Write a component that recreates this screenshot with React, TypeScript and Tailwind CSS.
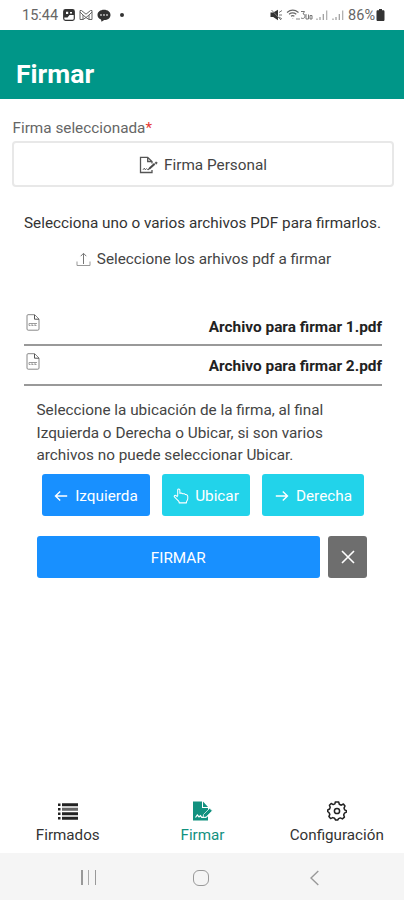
import type { ReactNode } from "react";

function ImageIcon() {
  return (
    <svg width="12" height="12" viewBox="0 0 12 12">
      <rect x="0.7" y="0.7" width="10.6" height="10.6" rx="1.8" fill="#fff" stroke="#333" strokeWidth="1.2" />
      <path d="M1 1h10v5H6.500L4.500 8.500H1z" fill="#333" />
      <path d="M3 2.800h2.200V5H3zM7 3h2v1.500H7z" fill="#fff" />
    </svg>
  );
}

function MailIcon() {
  return (
    <svg width="14" height="12" viewBox="0 0 14 12" fill="none" stroke="#666" strokeWidth="1">
      <path d="M1 1.500v9h3V6l3 2.500L10 6v4.500h3v-9h-1.500L7 5.200 2.500 1.500zM4 6 1 3M10 6l3-3M4 10.500 7 8.500l3 2" />
    </svg>
  );
}

function ChatIcon() {
  return (
    <svg width="14" height="13" viewBox="0 0 14 13">
      <path d="M7 .8c3.800 0 6.500 2.200 6.500 5.100S10.800 11 7.200 11L4.500 12.700 4 10.500C1.800 9.600.5 8 .5 5.900.5 3 3.200.8 7 .8z" fill="#333" />
      <g fill="#ccc"><circle cx="4" cy="6" r=".9" /><circle cx="7" cy="6" r=".9" /><circle cx="10" cy="6" r=".9" /></g>
    </svg>
  );
}

function MuteIcon() {
  return (
    <svg width="13" height="12" viewBox="0 0 13 12">
      <path d="M.5 3.500h2.700L8 .8v10.400L3.200 8H.5z" fill="#333" />
      <path d="M1.500 1l9.500 10M9 3.500l3-2M9 6h3M9 8l3 2" stroke="#777" strokeWidth="1" />
    </svg>
  );
}

function WifiIcon() {
  return (
    <svg width="14" height="12" viewBox="0 0 14 12" fill="none" stroke="#666" strokeWidth="1.200">
      <path d="M1 3.500C4.500.7 9 .7 12.500 3.500M3 5.300c2.300-1.700 5-1.700 7.300 0M5 7.200c1.100-.8 2.300-.8 3.400 0" />
      <path d="M6.700 9.200v.6M11 9v2M13 9v2" stroke="#999" />
    </svg>
  );
}

function VolteIcon() {
  return (
    <svg width="13" height="12" viewBox="0 0 13 12" fill="none" stroke="#777" strokeWidth="1">
      <path d="M1 2.500h3.500L3 5c3 0 2.500 4.500-.2 4.500L1 9M6 5v5h2.500V5.500M10 6.500h2V10h-2z" />
    </svg>
  );
}

function SignalIcon() {
  return (
    <svg width="12" height="12" viewBox="0 0 12 12" stroke="#999" strokeWidth="1.200">
      <path d="M1 9.500V11M4 8v3M7.300 5v6" />
      <path d="M10.700 1.500V11" stroke="#aaa" />
    </svg>
  );
}

function BatteryIcon() {
  return (
    <svg width="9" height="12" viewBox="0 0 9 12">
      <path d="M3 0h3v1.200h1.200c.8 0 1.300.5 1.300 1.300v8.200c0 .8-.5 1.300-1.300 1.300H1.800C1 12 .5 11.500.5 10.700V2.500C.5 1.700 1 1.200 1.800 1.200H3z" fill="#333" />
    </svg>
  );
}

function SignDocIcon() {
  return (
    <svg width="19" height="18" viewBox="0 0 19 18" fill="none" stroke="#555" strokeWidth="1.300">
      <path d="M13 14v2.500H1.500V1.300h7.200L13 5.500v2M8.700 1.300v4.200H13" />
      <path d="m10 11.800 5-4.500 1.200 1.100-5 4.500-1.700.4zM16 6.800l1.200-1 1.200 1.200-1.200 1.200z" fill="#444" strokeWidth=".5" />
      <path d="m4 13.800 1.300-1.600 1 1.600 1.200-1.200 1 1h1.500" strokeWidth="1" />
    </svg>
  );
}

function UploadIcon() {
  return (
    <svg width="15" height="15" viewBox="0 0 15 15" fill="none" stroke="#777" strokeWidth="1">
      <path d="M7.500 12V1.500M4.700 4.200l2.800-2.900 2.800 2.900" />
      <path d="M1 9.500v4h13v-4" stroke="#999" />
    </svg>
  );
}

function PdfIcon() {
  return (
    <svg width="14" height="17" viewBox="0 0 14 17" fill="none" stroke="#888" strokeWidth="1">
      <path d="M1 1.800C1 1 1.500.7 2 .7h6.700L13 5v10c0 .8-.4 1.200-1.200 1.200H2.200C1.400 16.200 1 15.800 1 15z" />
      <path d="M8.500.9v4.300H13" stroke="#555" />
      <path d="M3 9.500h8M3 11.500h1.500m1 0h2m1 0h2M3 9.500v2M6 9.500v2M9 9.500v2" strokeWidth=".8" />
    </svg>
  );
}

function ArrowIcon({ right = false }: { right?: boolean }) {
  return (
    <svg width="14" height="12" viewBox="0 0 14 12" fill="none" stroke="#fff" strokeWidth="1.400">
      {right ? <path d="M.8 6h11.700M7.800 1.500 12.500 6l-4.700 4.500" /> : <path d="M13.200 6H1.500M6.200 1.500 1.500 6l4.700 4.500" />}
    </svg>
  );
}

function PointerIcon() {
  return (
    <svg width="16" height="16" viewBox="0 0 17 17" fill="none" stroke="#fff" strokeWidth="1.100" strokeLinejoin="round">
      <path d="M5 8.500V2.200c0-1.600 2.300-1.600 2.300 0v3.500l1.500-.4 1.500.8 1.700-.1 1.300 1 1.200.1c.8.500 1.200 1 1.200 2v2c0 1.600-1 2.500-1.400 3.700v1H6.500v-1c-.5-1.500-2.300-2.600-3.700-4L1.500 9.500c-.8-1.200.4-2.100 1.500-1.500L5 9.500" />
    </svg>
  );
}

function ListIcon() {
  return (
    <svg width="20" height="17" viewBox="0 0 20 17" fill="#222">
      <path d="M0 .5h2.500V3H0zM0 5h2.500v2.500H0zM0 9.500h2.500V12H0zM0 14h2.500v2.500H0z" />
      <path d="M4 .3h16v2.900H4zM4 9.300h16v2.900H4zM4 13.800h16v2.900H4z" />
      <path d="M4 4.700h16v3.100H4z" fill="#666" />
    </svg>
  );
}

function SignSolidIcon() {
  return (
    <svg width="20" height="20" viewBox="0 0 20 20">
      <path d="M0 .5h9v6.500h6v3l-5 4.700V17h3l2-1.800v4.300H0z" fill="#12917f" />
      <path d="M10 .5 15 6h-5z" fill="#12917f" />
      <path d="m10.500 13.500 6.200-6.200 2.600 2.500-6.200 6.200-3 .6z" fill="#12917f" stroke="#fff" strokeWidth=".7" />
      <path d="m2.500 16.500 1.800-2.500 1.700 2 1.500-1.300 1.200 1.600h2" fill="none" stroke="#fff" strokeWidth="1.200" />
    </svg>
  );
}

function GearIcon() {
  return (
    <svg width="20" height="20" viewBox="0 0 20 20" fill="none" stroke="#222" strokeWidth="1.500" strokeLinejoin="round">
      <path d="M8.300 1h3.400l.6 2.300 2 .9 2.100-1.200 1.600 2-1 2.100.7 1.800 1.700.8v1.500l-2 1-.7 1.700.7 2.200-2 1.800-2.100-1-1.700.7-.9 1.400H8.600l-1-1.700-1.900-.7-2.100 1-1.700-2 .9-2.200-.7-1.700L.7 10.400V9l1.900-1 .6-1.800-.8-2L4.200 2.500l2 1.100 1.700-.7z" />
      <circle cx="10" cy="10" r="2.600" />
    </svg>
  );
}

function FileRow({ name }: { name: string }) {
  return (
    <div className="flex h-[39.5px] justify-between border-b-2 border-[#999] pl-[2px]">
      <div className="pt-[7px]"><PdfIcon /></div>
      <span className="pt-[10px] text-[15.400px] leading-5 font-bold whitespace-nowrap text-[#222]">{name}</span>
    </div>
  );
}

function Tab({ icon, label, className }: { icon: ReactNode; label: string; className: string }) {
  return (
    <div className={`flex flex-col items-center ${className}`}>
      <div className="flex h-[22px] items-center">{icon}</div>
      <span className="mt-[3px] text-[15.200px] leading-5 whitespace-nowrap">{label}</span>
    </div>
  );
}

export default function App() {
  return (
    <div className="flex h-[900px] w-[404px] flex-col overflow-hidden bg-white font-[Roboto,sans-serif] text-[15.300px] text-[#444]">
      <div className="flex h-[30px] shrink-0 items-center justify-between pr-[19px] pl-[22px]">
        <div className="flex items-center">
          <span className="w-[41px] pt-px text-[14.500px] text-[#666]">15:44</span>
          <div className="flex items-center gap-[4px]"><ImageIcon /><MailIcon /><ChatIcon /></div>
          <span className="ml-[9px] size-[3.500px] rounded-full bg-[#333]" />
        </div>
        <div className="flex items-center">
          <MuteIcon />
          <div className="ml-[3px] flex"><WifiIcon /><VolteIcon /></div>
          <div className="ml-[3px] flex gap-[4px]"><SignalIcon /><SignalIcon /></div>
          <span className="mr-px ml-[4px] pt-px text-[14.500px] text-[#666]">86%</span>
          <BatteryIcon />
        </div>
      </div>

      <header className="flex h-[69px] shrink-0 items-center bg-[#009688] pt-[19px] pl-[16px]">
        <h1 className="text-[26.500px] leading-8 font-bold text-white">Firmar</h1>
      </header>

      <main className="flex flex-1 flex-col">
        <label className="mt-[19px] ml-[12.500px] text-[15.300px] leading-5 text-[#666]">
          Firma seleccionada<span className="text-[#e53935]">*</span>
        </label>
        <button className="mr-[10px] mt-[3px] ml-[12px] flex h-[46px] items-center justify-center gap-[6px] rounded-[4px] border-2 border-[#e8e8e8] pt-[2px] text-[#444]">
          <SignDocIcon />Firma Personal
        </button>
        <p className="mt-[26px] pl-px text-center leading-5 whitespace-nowrap text-[#333]">Selecciona uno o varios archivos PDF para firmarlos.</p>
        <div className="mt-[16px] flex items-center justify-center gap-[6px] pl-[3px] leading-5 whitespace-nowrap text-[#444]">
          <UploadIcon />Seleccione los arhivos pdf a firmar
        </div>

        <div className="mt-[37.500px] mr-[22px] ml-[24px]">
          <FileRow name="Archivo para firmar 1.pdf" />
          <FileRow name="Archivo para firmar 2.pdf" />
        </div>

        <p className="mt-[13.500px] ml-[36.500px] leading-[22.700px] whitespace-nowrap">
          Seleccione la ubicación de la firma, al final<br />
          Izquierda o Derecha o Ubicar, si son varios<br />
          archivos no puede seleccionar Ubicar.
        </p>

        <div className="mt-[7px] ml-[42px] flex h-[42px] gap-[12px] text-white">
          <button className="flex w-[108px] items-center justify-center gap-[7px] rounded-[3px] bg-[#1890ff] pt-[2px]"><ArrowIcon />Izquierda</button>
          <button className="flex w-[88px] items-center justify-center gap-[6px] rounded-[3px] bg-[#22d3ea] pt-[2px]"><PointerIcon />Ubicar</button>
          <button className="flex w-[102px] items-center justify-center gap-[7px] rounded-[3px] bg-[#22d3ea] pt-[2px] pl-px"><ArrowIcon right />Derecha</button>
        </div>
        <div className="mt-[20px] ml-[36.500px] flex h-[42px] gap-[8px] text-white">
          <button className="w-[283.500px] rounded-[3px] bg-[#1890ff] pt-[2px]">FIRMAR</button>
          <button className="flex w-[39px] items-center justify-center rounded-[3px] bg-[#6e6e6e]">
            <svg width="14" height="14" viewBox="0 0 14 14" stroke="#fff" strokeWidth="1.600"><path d="m1 1 12 12M13 1 1 13" /></svg>
          </button>
        </div>
      </main>

      <nav className="flex h-[53px] shrink-0 text-[#333]">
        <Tab icon={<ListIcon />} label="Firmados" className="w-[135.500px]" />
        <Tab icon={<SignSolidIcon />} label="Firmar" className="w-[134px] text-[#12917f]" />
        <Tab icon={<GearIcon />} label="Configuración" className="w-[134.500px]" />
      </nav>

      <div className="flex h-[47px] shrink-0 items-center bg-[#f5f5f5] pt-[2px]">
        <div className="ml-[81px] flex h-[15px] w-[15px] justify-between">
          <span className="w-[1.500px] bg-[#999]" /><span className="w-[1.500px] bg-[#aaa]" /><span className="w-[1.500px] bg-[#999]" />
        </div>
        <div className="ml-[97px] size-[16px] rounded-[6px] border-[1.500px] border-[#999]" />
        <svg className="ml-[101px]" width="9" height="16" viewBox="0 0 9 16" fill="none" stroke="#999" strokeWidth="1.400"><path d="M8.300 1 1 8l7.300 7" /></svg>
      </div>
    </div>
  );
}
